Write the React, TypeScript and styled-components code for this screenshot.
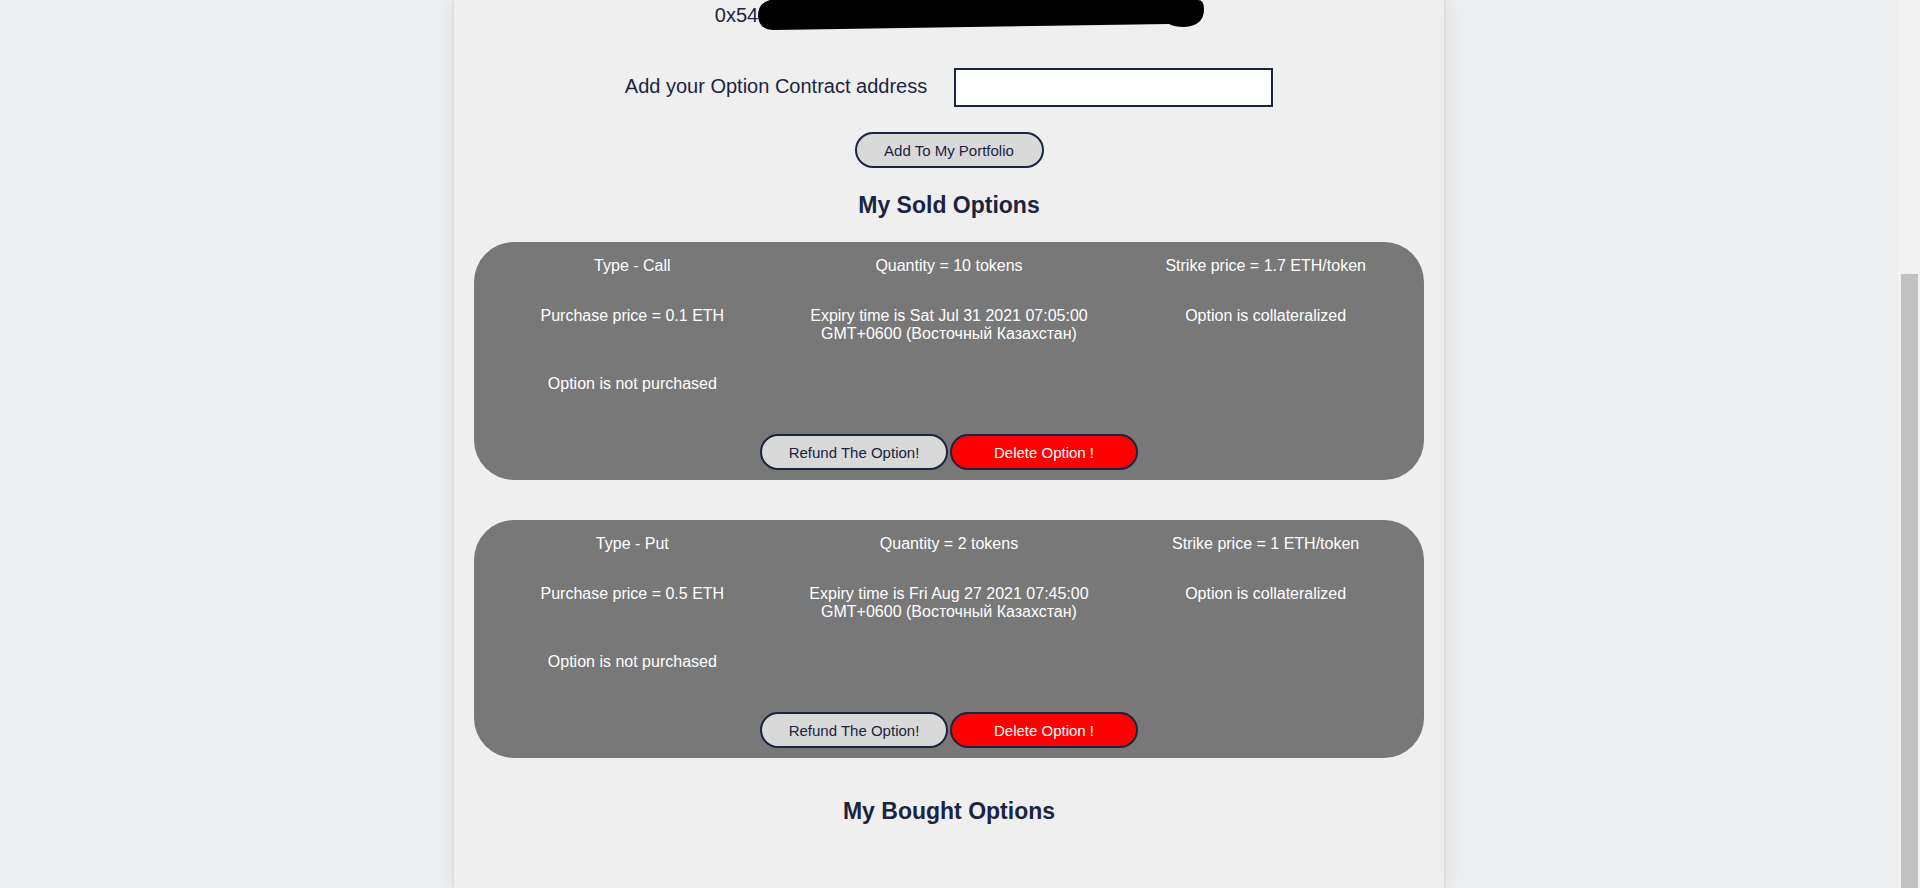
import React from "react";
import styled, { createGlobalStyle } from "styled-components";

const GlobalStyle = createGlobalStyle`
  html, body {
    margin: 0;
    padding: 0;
    background: #edeef0;
    font-family: "Liberation Sans", Arial, Helvetica, sans-serif;
  }
  * { box-sizing: border-box; }
`;

const NAVY = "#1b2440";

const Shell = styled.div`
  display: flex;
  height: 100vh;
  overflow: hidden;
`;

const Main = styled.main`
  flex: 1;
  display: flex;
  justify-content: center;
`;

const Column = styled.div`
  width: 990px;
  background: #efefef;
  box-shadow: 0 0 18px rgba(0, 0, 0, 0.09), 0 0 2px rgba(0, 0, 0, 0.12);
  display: flex;
  flex-direction: column;
  align-items: center;
  padding: 0 20px;
`;

const AddressRow = styled.div`
  display: flex;
  align-items: center;
  justify-content: center;
  height: 30px;
  padding-left: 21px;
`;

const AddressText = styled.span`
  font-size: 20px;
  line-height: 23px;
  color: ${NAVY};
`;

const FormRow = styled.div`
  display: flex;
  align-items: center;
  gap: 27px;
  margin-top: 38px;
`;

const Label = styled.label`
  font-size: 20px;
  line-height: 23px;
  color: ${NAVY};
  margin-top: -3px;
`;

const AddressInput = styled.input`
  width: 319px;
  height: 39px;
  border: 2px solid ${NAVY};
  background: #ffffff;
  outline: none;
`;

const PillButton = styled.button<{ $danger?: boolean }>`
  width: 188px;
  height: 36px;
  border: 2px solid ${NAVY};
  border-radius: 18px;
  background: ${(p) => (p.$danger ? "#ff0000" : "#d9d9d9")};
  color: ${(p) => (p.$danger ? "#ffffff" : NAVY)};
  font-family: "Liberation Sans", Arial, sans-serif;
  font-size: 15px;
  padding: 0;
  cursor: pointer;
`;

const AddButton = styled(PillButton)`
  width: 189px;
  margin-top: 25px;
`;

const SectionTitle = styled.h2<{ $gap: number }>`
  margin: ${(p) => p.$gap}px 0 0;
  font-size: 23px;
  line-height: 26px;
  font-weight: 700;
  color: ${NAVY};
`;

const Card = styled.section<{ $gap: number }>`
  align-self: stretch;
  margin-top: ${(p) => p.$gap}px;
  background: #787878;
  border-radius: 40px;
  padding: 15px 0 10px;
  display: flex;
  flex-direction: column;
  align-items: center;
`;

const InfoGrid = styled.div`
  align-self: stretch;
  display: grid;
  grid-template-columns: repeat(3, 1fr);
  row-gap: 32px;
`;

const Info = styled.div`
  font-size: 16px;
  line-height: 18px;
  color: #ffffff;
  text-align: center;
`;

const Actions = styled.div`
  display: flex;
  gap: 2px;
  margin-top: 41px;
`;

const ScrollTrack = styled.div`
  width: 22px;
  background: #f1f1f1;
  padding: 274px 2px 0 3px;
  display: flex;
`;

const ScrollThumb = styled.div`
  flex: 1;
  background: #c1c1c1;
`;

const Redaction = () => (
  <svg width="446" height="30" viewBox="0 0 446 30" aria-hidden="true">
    <path
      d="M12 0 L440 0 Q446 0 446 9 Q446 26 426 27 Q416 27 411 24 L16 30 Q1 30 0 16 Q0 3 12 0 Z"
      fill="#000000"
    />
  </svg>
);

type Option = {
  type: string;
  quantity: string;
  strike: string;
  purchase: string;
  expiry: string;
  expiryZone: string;
};

const options: Option[] = [
  {
    type: "Call",
    quantity: "10",
    strike: "1.7",
    purchase: "0.1",
    expiry: "Sat Jul 31 2021 07:05:00",
    expiryZone: "GMT+0600 (Восточный Казахстан)",
  },
  {
    type: "Put",
    quantity: "2",
    strike: "1",
    purchase: "0.5",
    expiry: "Fri Aug 27 2021 07:45:00",
    expiryZone: "GMT+0600 (Восточный Казахстан)",
  },
];

const OptionCard = ({ o, gap }: { o: Option; gap: number }) => (
  <Card $gap={gap}>
    <InfoGrid>
      <Info>Type - {o.type}</Info>
      <Info>Quantity = {o.quantity} tokens</Info>
      <Info>Strike price = {o.strike} ETH/token</Info>
      <Info>Purchase price = {o.purchase} ETH</Info>
      <Info>
        Expiry time is {o.expiry}
        <br />
        {o.expiryZone}
      </Info>
      <Info>Option is collateralized</Info>
      <Info>Option is not purchased</Info>
      <Info />
      <Info />
    </InfoGrid>
    <Actions>
      <PillButton>Refund The Option!</PillButton>
      <PillButton $danger>Delete Option !</PillButton>
    </Actions>
  </Card>
);

export default function App() {
  return (
    <>
      <GlobalStyle />
      <Shell>
        <Main>
          <Column>
            <AddressRow>
              <AddressText>0x54</AddressText>
              <Redaction />
            </AddressRow>
            <FormRow>
              <Label htmlFor="contract">Add your Option Contract address</Label>
              <AddressInput id="contract" type="text" />
            </FormRow>
            <AddButton>Add To My Portfolio</AddButton>
            <SectionTitle $gap={24}>My Sold Options</SectionTitle>
            {options.map((o, i) => (
              <OptionCard key={i} o={o} gap={i === 0 ? 24 : 40} />
            ))}
            <SectionTitle $gap={40}>My Bought Options</SectionTitle>
          </Column>
        </Main>
        <ScrollTrack>
          <ScrollThumb />
        </ScrollTrack>
      </Shell>
    </>
  );
}
